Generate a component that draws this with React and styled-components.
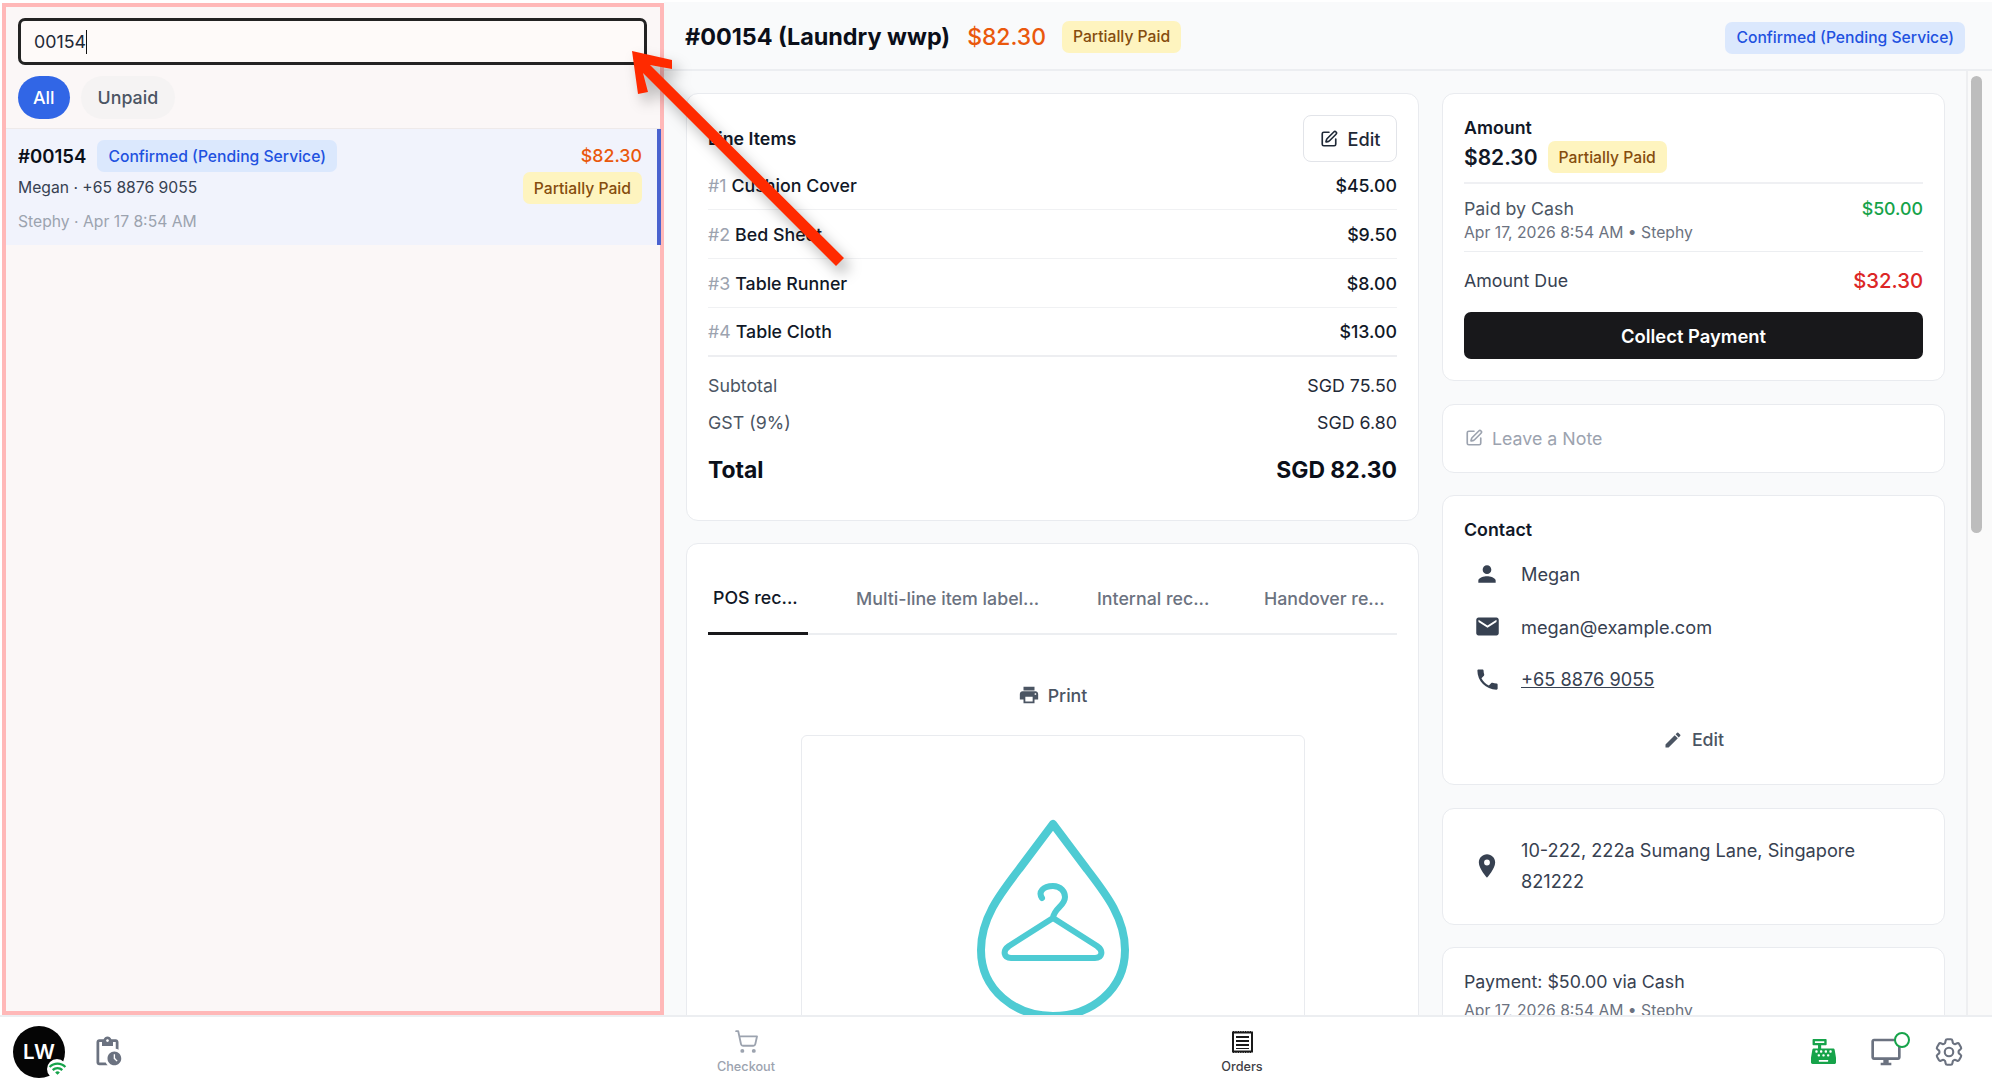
import React from "react";
import styled, { createGlobalStyle } from "styled-components";
import { SquarePen, ShoppingCart } from "lucide-react";
import { MdPerson, MdEmail, MdPhone, MdPlace, MdEdit, MdPrint, MdOutlinePendingActions, MdWifi, MdOutlineDesktopWindows } from "react-icons/md";
import { FaCashRegister } from "react-icons/fa";
import { HiOutlineCog6Tooth } from "react-icons/hi2";

const Global = createGlobalStyle`
  * { box-sizing: border-box; }
  html, body { margin: 0; padding: 0; height: 100%; background: #fff; overflow: hidden; }
  body { font-family: Inter, "Liberation Sans", sans-serif; color: #111827; }
`;

const Page = styled.div`
  position: relative; width: 1992px; height: 1090px; display: flex; flex-direction: column; overflow: hidden; background: #fff;
`;
const Workspace = styled.div`display: flex; flex: 1; min-height: 0;`;

const ListPanel = styled.aside`
  width: 662px; flex: none; margin: 3px 0 0 2px; border: 4px solid #ffb8b8; background: #fbf7f7;
  display: flex; flex-direction: column;
`;
const SearchArea = styled.div`
  padding: 11px 13px 9px 12px; display: flex; flex-direction: column; gap: 11px; border-bottom: 1px solid #eeeaea;
`;
const SearchBox = styled.div`
  height: 47px; border: 3px solid #232323; border-radius: 7px; background: #fefaf9; display: flex; align-items: center;
  padding-left: 13px; font-size: 17.8px; color: #1f2937;
`;
const Caret = styled.span`width: 1.5px; height: 24px; background: #111;`;
const Chips = styled.div`display: flex; gap: 11px;`;
const Chip = styled.div`
  height: 43px; padding: 0 ${p => (p.$active ? 15 : 17)}px; border-radius: 22px; display: flex; align-items: center; font-size: 17.8px; font-weight: 500;
  background: ${p => (p.$active ? "#3166e6" : "#f5f3f3")}; color: ${p => (p.$active ? "#fff" : "#4b5563")};
`;
const OrderRow = styled.div`
  height: 116px; margin-right: -1px; padding: 11px 15px 0 12px; background: #f1f3fc; border-right: 4px solid #4a62cf; display: flex; justify-content: space-between;
`;
const OrderCol = styled.div`display: flex; flex-direction: column;`;
const OrderRight = styled(OrderCol)`align-items: flex-end;`;
const OrderTop = styled.div`display: flex; align-items: center; gap: 11px; height: 32px;`;
const OrderNo = styled.span`font-size: 18.6px; font-weight: 600; color: #0b0f19;`;
const OrderPrice = styled.span`height: 32px; line-height: 32px; font-size: 17.8px; font-weight: 500; color: #ea580c;`;
const OrderMeta = styled.div`height: 32px; line-height: 32px; font-size: 15.7px; color: #374151;`;
const OrderFoot = styled.div`margin-top: 1px; height: 34px; line-height: 34px; font-size: 15.7px; color: #9ca3af;`;

const Badge = styled.span`
  display: inline-flex; align-items: center; height: 32px; padding: 0 11px; border-radius: 7px; font-size: 15.7px; font-weight: 500; white-space: nowrap;
  background: ${p => (p.$tone === "blue" ? "#dbe8fd" : "#fef4bf")}; color: ${p => (p.$tone === "blue" ? "#1f52e0" : "#854d0e")};
`;

const Main = styled.main`flex: 1; min-width: 0; margin-top: 2px; display: flex; flex-direction: column; background: #f9fafb;`;
const Header = styled.header`
  height: 69px; flex: none; padding: 2px 27px 0 21px; display: flex; align-items: center; border-bottom: 2px solid #eceef1;
`;
const Title = styled.h1`margin: 0; font-size: 23.4px; font-weight: 700; color: #0b0f19; white-space: nowrap;`;
const HeaderPrice = styled.span`margin-left: 17px; font-size: 22.9px; font-weight: 500; color: #ea580c;`;
const HeaderBadgeSlot = styled.span`margin-left: 16px; display: flex;`;
const HeaderEnd = styled.span`margin-left: auto; margin-top: 2px; display: flex;`;

const Content = styled.div`flex: 1; min-height: 0; display: flex;`;
const Scroller = styled.div`
  flex: 1; min-width: 0; overflow: hidden; padding: 22px 21px 0 22px; display: grid; grid-template-columns: 733px 503px; column-gap: 23px; align-items: start;
`;
const Track = styled.div`width: 26px; flex: none; background: #fafafa; border-left: 2px solid #eeeff1; padding: 5px 0 0 3px;`;
const Thumb = styled.div`width: 11px; height: 457px; border-radius: 6px; background: #bdbdbd;`;

const Column = styled.div`display: flex; flex-direction: column; gap: ${p => p.$gap}px;`;
const Card = styled.section`
  background: #fff; border: 1.5px solid #e9ebef; border-radius: 12px; padding: 21px;
`;
const ItemsCard = styled(Card)`height: 428px; padding-bottom: 0;`;
const CardHead = styled.div`display: flex; justify-content: space-between; align-items: center; height: 47px; margin-bottom: -1px;`;
const CardTitle = styled.div`font-size: 17.8px; font-weight: 600; color: #111827;`;
const OutlineButton = styled.div`
  width: 94px; height: 47px; border: 1.5px solid #e2e4e9; border-radius: 8px; display: flex; align-items: center; justify-content: center; gap: 10px;
  font-size: 18.2px; font-weight: 500; color: #1f2937; background: #fff;
`;
const ItemRow = styled.div`
  height: 49px; display: flex; justify-content: space-between; align-items: center; font-size: 17.8px; font-weight: 500; color: #111827;
  border-bottom: ${p => (p.$last ? "2px solid #edeef1" : "1px solid #f0f1f3")};
`;
const ItemIndex = styled.span`color: #9ca3af; font-weight: 400; margin-right: 5px;`;
const SummaryRows = styled.div`padding-top: 10px;`;
const SummaryRow = styled.div`
  height: 37px; display: flex; justify-content: space-between; align-items: center; font-size: 17.8px; color: #1f2937;
`;
const SummaryLabel = styled.span`color: #4b5563;`;
const TotalRow = styled.div`
  margin-top: 9px; height: 40px; display: flex; justify-content: space-between; align-items: center; font-size: 22.9px; font-weight: 700; color: #0b0f19;
`;

const ReceiptCard = styled(Card)`height: 800px; padding-top: 0;`;
const Tabs = styled.div`display: flex; height: 91px; border-bottom: 2px solid #eceef1;`;
const Tab = styled.div`
  padding: 18px 0 0 ${p => p.$left}px; width: ${p => p.$w}px; flex: none; display: flex; align-items: center; font-size: 17.8px; font-weight: 500; white-space: nowrap;
  color: ${p => (p.$active ? "#111827" : "#6b7280")};
  height: 91px; border-bottom: ${p => (p.$active ? "3px solid #18181b" : "none")};
`;
const PrintRow = styled.div`
  height: 100px; padding-top: 20px; display: flex; align-items: center; justify-content: center; gap: 8px; font-size: 17.8px; font-weight: 500; color: #4b5563;
`;
const ReceiptBox = styled.div`
  width: 504px; margin: 0 auto; height: 500px; border: 1.5px solid #e9ebef; border-radius: 6px; padding-top: 82px; display: flex; justify-content: center; align-items: flex-start;
`;

const AmountCard = styled(Card)`height: 288px;`;
const AmountHead = styled.div`height: 62px; padding-top: 2px;`;
const AmountLine = styled.div`display: flex; align-items: center; gap: 10px; height: 32px; margin-top: 3px;`;
const AmountValue = styled.span`font-size: 21px; font-weight: 600; color: #111827;`;
const PaidBlock = styled.div`
  border-top: 2px solid #eff0f3; border-bottom: 1px solid #eceef1; margin-top: 5px; height: 70px; padding-top: 10px;
`;
const PaidRow = styled.div`display: flex; justify-content: space-between; align-items: center; height: 28px; font-size: 17.8px; color: #4b5563;`;
const PaidValue = styled.span`color: #16a34a; font-weight: 500;`;
const Subtle = styled.div`font-size: 15.7px; color: #6b7280; line-height: 20px; margin-top: ${p => p.$top || 0}px;`;
const DueRow = styled.div`display: flex; justify-content: space-between; align-items: center; height: 60px; padding-bottom: 4px; font-size: 17.8px; color: #374151;`;
const DueValue = styled.span`font-size: 20.3px; font-weight: 500; color: #dc2626;`;
const PrimaryButton = styled.div`
  height: 47px; background: #18181b; border-radius: 7px; color: #fff; font-size: 18.4px; font-weight: 600; display: flex; align-items: center; justify-content: center;
`;

const NoteCard = styled(Card)`height: 69px; padding: 0 22px; display: flex; align-items: center; gap: 9px; color: #9ca3af; font-size: 17.8px;`;
const ContactCard = styled(Card)`height: 290px; padding-top: 22px;`;
const ContactRow = styled.div`display: flex; align-items: center; height: 52.5px; font-size: 18.2px; color: #374151;`;
const IconCell = styled.span`width: 57px; flex: none; padding-right: 11px; display: flex; justify-content: center; color: #374151;`;
const ContactTitle = styled(CardTitle)`height: 24px; line-height: 24px; margin-bottom: 6px;`;
const PhoneLink = styled.span`text-decoration: underline;`;
const TextAction = styled.div`
  display: flex; align-items: center; justify-content: center; gap: 9px; height: 40px; margin-top: 14px; font-size: 17.8px; font-weight: 500; color: #4b5563;
`;
const AddressCard = styled(Card)`height: 117px; padding: 0 22px 0 21px; display: flex; align-items: center;`;
const AddressText = styled.div`font-size: 18.2px; line-height: 31px; color: #374151; width: 370px;`;
const PaymentCard = styled(Card)`height: 120px;`;
const PaymentLine = styled.div`font-size: 17.8px; color: #374151; line-height: 26px;`;

const BottomBar = styled.footer`
  height: 75px; flex: none; border-top: 2px solid #eceef1; padding-bottom: 4px; background: #fff; display: grid; grid-template-columns: 498px 992px 502px; align-items: center;
`;
const BarLeft = styled.div`display: flex; align-items: center; padding-left: 13px; gap: 26px;`;
const Avatar = styled.div`
  position: relative; width: 52px; height: 52px; border-radius: 50%; background: #050505; color: #fff; display: flex; align-items: center; justify-content: center;
  font-size: 20.5px; font-weight: 600;
`;
const WifiDot = styled.span`
  position: absolute; right: -2px; bottom: -1px; width: 20px; height: 20px; border-radius: 50%; background: #fff; color: #16a34a; display: flex; align-items: center; justify-content: center;
`;
const BarNav = styled.nav`display: grid; grid-template-columns: 1fr 1fr;`;
const NavItem = styled.div`
  display: flex; flex-direction: column; align-items: center; gap: 5px; font-size: 12.7px; font-weight: 500;
  color: ${p => (p.$active ? "#3f3f46" : "#9ca3af")};
`;
const NavIcon = styled.span`height: 25px; display: flex; align-items: center;`;
const BarRight = styled.div`display: flex; align-items: center; justify-content: flex-end; gap: 30px; padding-right: 26px;`;
const StatusWrap = styled.span`position: relative; display: flex; color: #6b7280;`;
const StatusDot = styled.span`
  position: absolute; right: -8px; top: -4px; width: 16px; height: 16px; border-radius: 50%; background: #fff; border: 2.5px solid #16a34a;
`;
const Green = styled.span`display: flex; color: #16a34a; margin-right: 4px;`;
const Gray = styled.span`display: flex; color: #6b7280;`;

const ArrowOverlay = styled.svg`
  position: absolute; left: 0; top: 0; width: 1992px; height: 1090px; pointer-events: none; filter: drop-shadow(6px 8px 7px rgba(0,0,0,.3));
`;

const ReceiptIcon = () => (
  <svg width="21" height="22" viewBox="0 0 21 22">
    <rect x="1" y="1.5" width="19" height="19" fill="none" stroke="#1a1a1a" strokeWidth="2" />
    <path d="M1 .8H20M1 21.2H20" stroke="#1a1a1a" strokeWidth="1.5" strokeDasharray="1.2 1.2" />
    <path d="M4 6H17M4 10H17M4 14H17" stroke="#1a1a1a" strokeWidth="2" />
    <path d="M4 17.5H17" stroke="#1a1a1a" strokeWidth="1" />
  </svg>
);

const DropLogo = () => (
  <svg width="166" height="216" viewBox="0 0 166 216" fill="none" stroke="#4ecbd3" strokeLinejoin="round" strokeLinecap="round">
    <path strokeWidth="8" d="M83 6 L 50 50 C 30 76, 11 100, 11 132 C 11 172, 45 198, 83 198 C 121 198, 155 172, 155 132 C 155 100, 136 76, 116 50 Z" />
    <path strokeWidth="6" d="M72 80 C 68 74, 73 68, 83 68 C 91 68, 95 74, 95 79 C 95 88, 84 90, 83 100 L 127 128 C 134 133, 132 140, 125 140 L 41 140 C 34 140, 32 133, 39 128 L 83 100" />
  </svg>
);

const Arrow = () => (
  <ArrowOverlay viewBox="0 0 1992 1090">
    <polygon fill="#ff2a00" points="632,51 672,60 672,69 650,65 844,258 836,266 643,73 648,92 638,94" />
  </ArrowOverlay>
);

const items = [["#1", "Cushion Cover", "$45.00"], ["#2", "Bed Sheet", "$9.50"], ["#3", "Table Runner", "$8.00"], ["#4", "Table Cloth", "$13.00"]];

export default function App() {
  return (
    <Page>
      <Global />
      <Workspace>
        <ListPanel>
          <SearchArea>
            <SearchBox>00154<Caret /></SearchBox>
            <Chips><Chip $active>All</Chip><Chip>Unpaid</Chip></Chips>
          </SearchArea>
          <OrderRow>
            <OrderCol>
              <OrderTop><OrderNo>#00154</OrderNo><Badge $tone="blue">Confirmed (Pending Service)</Badge></OrderTop>
              <OrderMeta>Megan · +65 8876 9055</OrderMeta>
              <OrderFoot>Stephy · Apr 17 8:54 AM</OrderFoot>
            </OrderCol>
            <OrderRight>
              <OrderPrice>$82.30</OrderPrice>
              <Badge>Partially Paid</Badge>
            </OrderRight>
          </OrderRow>
        </ListPanel>
        <Main>
          <Header>
            <Title>#00154 (Laundry wwp)</Title>
            <HeaderPrice>$82.30</HeaderPrice>
            <HeaderBadgeSlot><Badge>Partially Paid</Badge></HeaderBadgeSlot>
            <HeaderEnd><Badge $tone="blue">Confirmed (Pending Service)</Badge></HeaderEnd>
          </Header>
          <Content>
            <Scroller>
              <Column $gap={22}>
                <ItemsCard>
                  <CardHead>
                    <CardTitle>Line Items</CardTitle>
                    <OutlineButton><SquarePen size={18} strokeWidth={2.2} />Edit</OutlineButton>
                  </CardHead>
                  {items.map((it, i) => (
                    <ItemRow key={it[0]} $last={i === items.length - 1}>
                      <span><ItemIndex>{it[0]}</ItemIndex>{it[1]}</span>
                      <span>{it[2]}</span>
                    </ItemRow>
                  ))}
                  <SummaryRows>
                    <SummaryRow><SummaryLabel>Subtotal</SummaryLabel><span>SGD 75.50</span></SummaryRow>
                    <SummaryRow><SummaryLabel>GST (9%)</SummaryLabel><span>SGD 6.80</span></SummaryRow>
                    <TotalRow><span>Total</span><span>SGD 82.30</span></TotalRow>
                  </SummaryRows>
                </ItemsCard>
                <ReceiptCard>
                  <Tabs>
                    <Tab $active $left={5} $w={100}>POS rec...</Tab>
                    <Tab $left={48} $w={241}>Multi-line item label...</Tab>
                    <Tab $left={48} $w={167}>Internal rec...</Tab>
                    <Tab $left={48} $w={180}>Handover re...</Tab>
                  </Tabs>
                  <PrintRow><MdPrint size={22} />Print</PrintRow>
                  <ReceiptBox><DropLogo /></ReceiptBox>
                </ReceiptCard>
              </Column>
              <Column $gap={22.5}>
                <AmountCard>
                  <AmountHead>
                    <CardTitle>Amount</CardTitle>
                    <AmountLine><AmountValue>$82.30</AmountValue><Badge>Partially Paid</Badge></AmountLine>
                  </AmountHead>
                  <PaidBlock>
                    <PaidRow><span>Paid by Cash</span><PaidValue>$50.00</PaidValue></PaidRow>
                    <Subtle $top={1}>Apr 17, 2026 8:54 AM • Stephy</Subtle>
                  </PaidBlock>
                  <DueRow><span>Amount Due</span><DueValue>$32.30</DueValue></DueRow>
                  <PrimaryButton>Collect Payment</PrimaryButton>
                </AmountCard>
                <NoteCard><SquarePen size={18} strokeWidth={2.2} />Leave a Note</NoteCard>
                <ContactCard>
                  <ContactTitle>Contact</ContactTitle>
                  <ContactRow><IconCell><MdPerson size={26} /></IconCell>Megan</ContactRow>
                  <ContactRow><IconCell><MdEmail size={27} /></IconCell>megan@example.com</ContactRow>
                  <ContactRow><IconCell><MdPhone size={27} /></IconCell><PhoneLink>+65 8876 9055</PhoneLink></ContactRow>
                  <TextAction><MdEdit size={20} />Edit</TextAction>
                </ContactCard>
                <AddressCard>
                  <IconCell><MdPlace size={28} /></IconCell>
                  <AddressText>10-222, 222a Sumang Lane, Singapore 821222</AddressText>
                </AddressCard>
                <PaymentCard>
                  <PaymentLine>Payment: $50.00 via Cash</PaymentLine>
                  <Subtle $top={6}>Apr 17, 2026 8:54 AM • Stephy</Subtle>
                </PaymentCard>
              </Column>
            </Scroller>
            <Track><Thumb /></Track>
          </Content>
        </Main>
      </Workspace>
      <BottomBar>
        <BarLeft>
          <Avatar>LW<WifiDot><MdWifi size={19} /></WifiDot></Avatar>
          <Gray><MdOutlinePendingActions size={33} /></Gray>
        </BarLeft>
        <BarNav>
          <NavItem><NavIcon><ShoppingCart size={25} strokeWidth={1.8} /></NavIcon>Checkout</NavItem>
          <NavItem $active><NavIcon><ReceiptIcon /></NavIcon>Orders</NavItem>
        </BarNav>
        <BarRight>
          <Green><FaCashRegister size={25} /></Green>
          <StatusWrap><MdOutlineDesktopWindows size={32} /><StatusDot /></StatusWrap>
          <Gray><HiOutlineCog6Tooth size={34} /></Gray>
        </BarRight>
      </BottomBar>
      <Arrow />
    </Page>
  );
}
